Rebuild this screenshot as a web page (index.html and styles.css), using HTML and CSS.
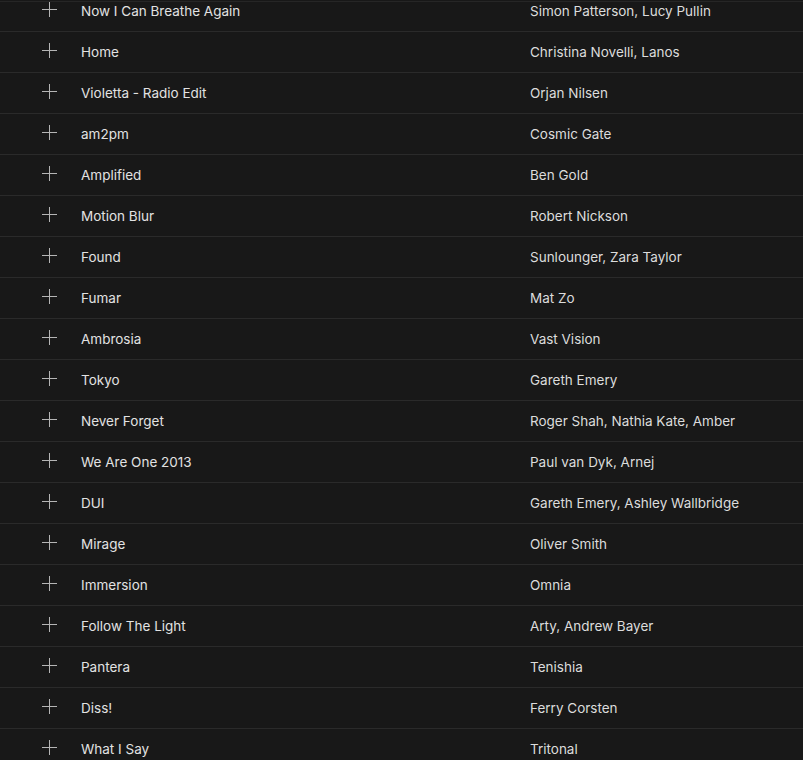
FILE: index.html
```html
<!DOCTYPE html>
<html>
<head>
<meta charset="utf-8">
<link rel="stylesheet" href="styles.css">
</head>
<body>
<div class="topline"></div>
<div class="list">
  <div class="row"><span class="add"></span><span class="title">Now I Can Breathe Again</span><span class="artist">Simon Patterson, Lucy Pullin</span></div>
  <div class="row"><span class="add"></span><span class="title">Home</span><span class="artist">Christina Novelli, Lanos</span></div>
  <div class="row"><span class="add"></span><span class="title">Violetta - Radio Edit</span><span class="artist">Orjan Nilsen</span></div>
  <div class="row"><span class="add"></span><span class="title">am2pm</span><span class="artist">Cosmic Gate</span></div>
  <div class="row"><span class="add"></span><span class="title">Amplified</span><span class="artist">Ben Gold</span></div>
  <div class="row"><span class="add"></span><span class="title">Motion Blur</span><span class="artist">Robert Nickson</span></div>
  <div class="row"><span class="add"></span><span class="title">Found</span><span class="artist">Sunlounger, Zara Taylor</span></div>
  <div class="row"><span class="add"></span><span class="title">Fumar</span><span class="artist">Mat Zo</span></div>
  <div class="row"><span class="add"></span><span class="title">Ambrosia</span><span class="artist">Vast Vision</span></div>
  <div class="row"><span class="add"></span><span class="title">Tokyo</span><span class="artist">Gareth Emery</span></div>
  <div class="row"><span class="add"></span><span class="title">Never Forget</span><span class="artist">Roger Shah, Nathia Kate, Amber</span></div>
  <div class="row"><span class="add"></span><span class="title">We Are One 2013</span><span class="artist">Paul van Dyk, Arnej</span></div>
  <div class="row"><span class="add"></span><span class="title">DUI</span><span class="artist">Gareth Emery, Ashley Wallbridge</span></div>
  <div class="row"><span class="add"></span><span class="title">Mirage</span><span class="artist">Oliver Smith</span></div>
  <div class="row"><span class="add"></span><span class="title">Immersion</span><span class="artist">Omnia</span></div>
  <div class="row"><span class="add"></span><span class="title">Follow The Light</span><span class="artist">Arty, Andrew Bayer</span></div>
  <div class="row"><span class="add"></span><span class="title">Pantera</span><span class="artist">Tenishia</span></div>
  <div class="row"><span class="add"></span><span class="title">Diss!</span><span class="artist">Ferry Corsten</span></div>
  <div class="row"><span class="add"></span><span class="title">What I Say</span><span class="artist">Tritonal</span></div>
</div>
</body>
</html>
```
FILE: styles.css
```css
html, body {
  margin: 0;
  padding: 0;
  background: #181818;
  overflow: hidden;
  height: 760px;
}
body {
  font-family: Inter, "Liberation Sans", sans-serif;
  font-size: 13.5px;
  color: #e2e2e2;
}
.topline {
  position: fixed;
  top: 1px;
  left: 0;
  right: 0;
  height: 1px;
  background: #262626;
}
.list {
  margin-top: -9px;
}
.row {
  box-sizing: border-box;
  display: grid;
  grid-template-columns: 81px 449px 1fr;
  align-items: center;
  height: 41px;
  padding-bottom: 1px;
  border-bottom: 1px solid #2a2a2a;
}
.add {
  position: relative;
  width: 15px;
  height: 15px;
  margin-left: 42px;
  margin-top: -2px;
}
.add::before, .add::after {
  content: "";
  position: absolute;
  background: #b5b5b5;
}
.add::before {
  left: 0;
  right: 0;
  top: 7px;
  height: 1px;
}
.add::after {
  top: 0;
  bottom: 0;
  left: 7px;
  width: 1px;
}
.title, .artist {
  white-space: nowrap;
}
.artist {
  color: #dcdcdc;
}
```
